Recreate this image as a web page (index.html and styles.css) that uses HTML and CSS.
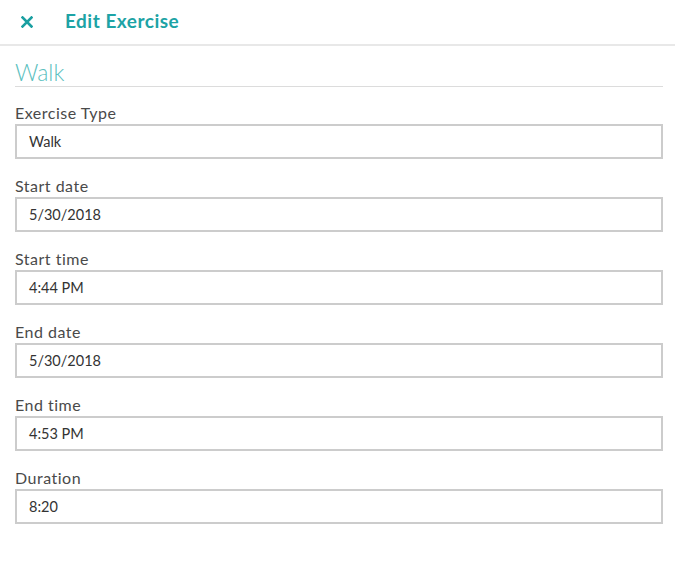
FILE: index.html
```html
<!DOCTYPE html>
<html>
<head>
<meta charset="utf-8">
<link rel="stylesheet" href="styles.css">
</head>
<body>
<div class="header">
  <span class="close">
    <svg width="12" height="12" viewBox="0 0 12 12"><path d="M1.5 1.5 L10.5 10.5 M10.5 1.5 L1.5 10.5" stroke="#1a9fa1" stroke-width="2.6" stroke-linecap="square"/></svg>
  </span>
  <span class="title">Edit Exercise</span>
</div>
<div class="content">
  <div class="name">Walk</div>
  <div class="field"><div class="label">Exercise Type</div><div class="input">Walk</div></div>
  <div class="field"><div class="label">Start date</div><div class="input">5/30/2018</div></div>
  <div class="field"><div class="label">Start time</div><div class="input">4:44 PM</div></div>
  <div class="field"><div class="label">End date</div><div class="input">5/30/2018</div></div>
  <div class="field"><div class="label">End time</div><div class="input">4:53 PM</div></div>
  <div class="field"><div class="label">Duration</div><div class="input">8:20</div></div>
</div>
</body>
</html>
```
FILE: styles.css
```css
html, body {
  margin: 0;
  padding: 0;
  background: #fff;
  font-family: Lato, "Open Sans", sans-serif;
}
.header {
  height: 40px;
  padding-bottom: 4px;
  border-bottom: 2px solid #e8e8e8;
  display: flex;
  align-items: center;
}
.close {
  display: flex;
  margin-left: 21px;
  margin-top: 3px;
  width: 12px;
  height: 12px;
}
.title {
  margin-left: 32px;
  font-size: 19px;
  font-weight: 700;
  letter-spacing: 0.5px;
  color: #1da3a5;
}
.content {
  padding: 0 12px 0 15px;
}
.name {
  margin-top: 12px;
  font-size: 23px;
  line-height: 28px;
  font-weight: 300;
  color: #5cbfc0;
  padding-bottom: 0;
  border-bottom: 1px solid #dcdcdc;
  margin-bottom: 16px;
}
.field {
  margin-bottom: 17px;
}
.label {
  font-size: 16px;
  line-height: 20px;
  letter-spacing: 0.5px;
  color: #4a4a4a;
  margin-bottom: 1px;
}
.input {
  height: 31px;
  border: 2px solid #cccccc;
  padding-left: 12px;
  font-size: 14.5px;
  line-height: 31px;
  color: #333;
}
```
